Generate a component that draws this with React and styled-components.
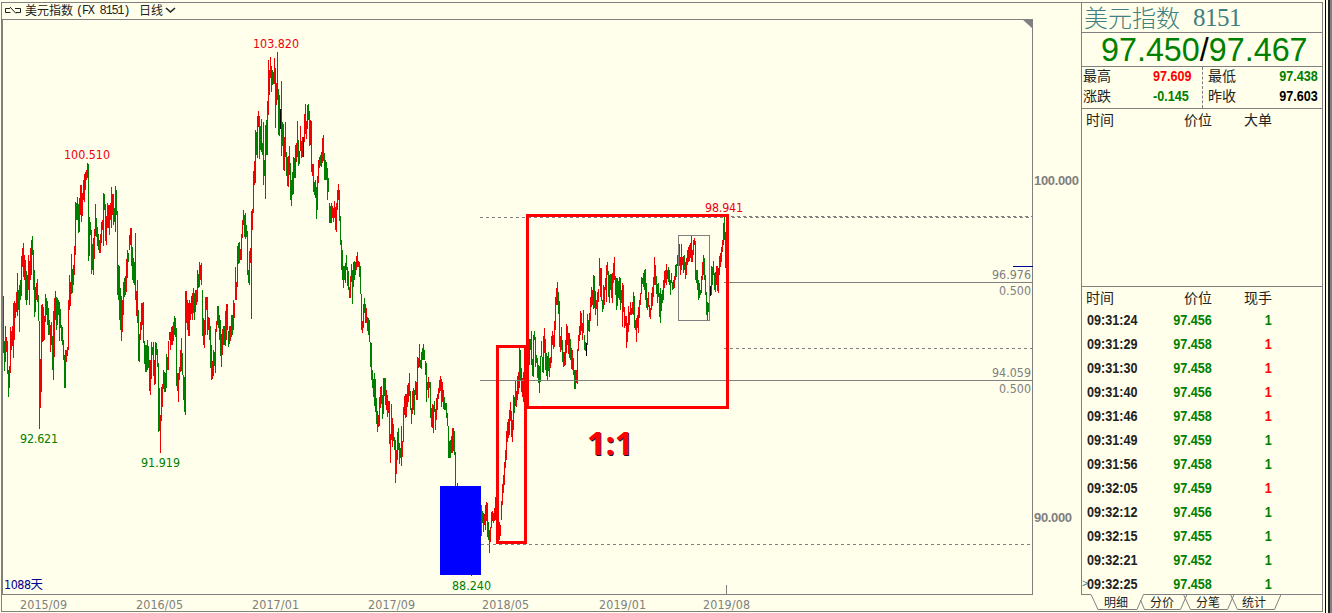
import React from 'react'
import styled, { createGlobalStyle } from 'styled-components'

const GlobalStyle = createGlobalStyle`
	* {
		box-sizing: border-box;
	}

	body {
		margin: 0;
		background: #ffffeb;
		overflow: hidden;
	}
`

const red = '#f00000'
const green = '#008000'
const gray = '#808080'
const hanFont = `'Noto Sans CJK SC', sans-serif`
const chartFont = `'DejaVu Sans Condensed', 'DejaVu Sans', sans-serif`

// Daily bars, one pixel column each: "startX: high-low+colour ..."
const bars = `
3: 296-353g 341-371g 326-362g 337-352r 341-374g 370-397g 366-388r
10: 327-373r 331-350g 326-346r 303-358g 301-340r 303-318g 292-312r 273-316r 290-310g 285-332g
20: 280-300g 256-296r 248-267r 243-277g 255-280r 260-300g 271-305g 275-300r 255-290r 261-305g
30: 248-280r 240-275r 236-255g 250-290g 270-317g 287-312r 283-300r 279-302g 295-321g 321-429g
40: 359-408r 305-392r 304-342r 307-341g 316-340r 294-322g 298-315g 301-325g 308-335g 320-335g
50: 325-352r 322-345r 336-370g 311-380r 298-357r 291-320r 297-330g 298-325g 300-315g 302-341g
60: 309-328g 325-341g 327-345g 340-360g 355-388g 350-388r 350-362r 347-356r 300-350r 275-310r
70: 282-306r 254-294g 269-293g 265-285r 246-275r 202-255r 203-220g 197-220r 204-233g 198-232r
80: 185-215r 185-222g 193-216r 180-200r 174-202r 172-190r 170-180r 163-178r 164-261g 217-256r
90: 222-235g 230-274g 244-270g 238-275r 229-259r 204-236r 218-237g 227-246g 234-250g 240-253g
100: 234-253r 222-243r 220-230r 193-246r 194-210g 204-241g 216-245r 203-228g 205-228r 205-235g
110: 203-220r 187-228g 194-215r 194-225g 208-222g 186-232r 190-215g 211-295g 265-300g 266-320g
120: 288-330g 296-341g 300-332r 282-315r 278-297g 276-295r 259-292r 250-278r 253-262g 235-250r
130: 228-245r 228-266g 247-280g 258-283g 262-285g 233-300g 291-316r 280-323g 310-361g 334-362r
140: 322-340r 303-330r 303-325r 302-343g 341-364g 345-372g 345-372g 340-370g 346-368g 360-391r
150: 360-395r 342-379r 347-355g 342-376g 360-385r 342-384r 343-355g 349-367g 363-432g 388-431g
160: 415-453r 387-421r 384-407r 370-389r 372-392g 373-392r 354-388g 357-370r 341-370r 332-340r
170: 332-350r 327-345g 326-345r 322-341r 316-335g 318-337g 328-386g 373-391g 373-402r 367-380r
180: 350-372r 338-371r 353-375g 375-400g 377-412g 291-415r 291-323r 300-330g 303-336r 300-336r
190: 303-320r 296-314r 293-320r 288-313g 293-320g 290-312g 290-305r 270-302r 274-288g 262-287g
200: 265-280r 263-285g 290-336g 318-345g 320-348r 297-335r 297-310r 297-335g 317-330r 318-340g
210: 326-368g 345-380g 361-379r 350-376r 352-366g 329-373r 321-332r 306-325g 306-328g 315-340r
220: 320-356g 334-367r 329-355r 326-345r 326-345g 311-346g 304-340r 304-330g 331-347g 326-344r
230: 326-341r 315-337g 315-335g 300-330r 303-318r 267-300g 282-300r 246-287r 243-264g 242-263g
240: 249-260r 234-260r 220-238r 210-225r 215-237g 213-239g 225-237g 231-275g 270-283g 251-285g
250: 248-263r 211-319r 209-230r 171-213r 161-185r 130-183r 132-155g 116-158r 111-127r 116-159g
260: 126-150g 119-152r 143-155g 122-185g 160-176g 125-199r 120-155g 101-155r 60-115r 70-95r
270: 57-78r 66-92r 70-85g 72-84g 58-84r 68-128g 83-105r 52-100r 89-135g 95-136g
280: 109-129k 81-156g 122-146g 124-170g 137-171r 122-157g 152-176g 157-186g 156-187r 146-175r
290: 163-200g 180-206r 172-195g 157-194r 158-178g 145-178r 143-162r 121-157g 140-166g 151-164r
300: 126-151r 141-158g 137-157r 137-157k 114-142r 104-134g 121-139r 105-129r 104-120g 111-146g
310: 120-145r 121-172g 164-176r 164-192g 182-195g 180-198r 187-219g 176-210r 160-183r 157-168r
320: 155-166g 152-167r 138-163r 135-161g 153-180g 160-180g 162-180g 168-200g 178-192g 203-223r
330: 206-223g 203-223g 206-218r 208-222g 201-218r 207-230g 203-232r 190-210r 184-200r 190-221g
340: 216-245g 240-270g 250-280g 266-288g 266-280g 263-283r 255-270g 267-286r 271-290g 287-298g
350: 276-298r 264-282r 270-304g 262-287r 261-280g 262-275r 256-270r 252-267g 261-267r 262-277g
360: 266-294g 294-330g 321-333r 304-328r 298-313g 304-323r 308-323r 317-331g 318-335g 320-342g
370: 342-367g 343-380g 370-388g 379-397r 373-406g 379-412r 398-424g 411-432g 415-427r 397-426r
380: 387-408r 386-404g 395-419g 378-414r 378-396g 378-405g 390-410r 395-417g 401-413r 401-444g
390: 434-463r 404-440g 418-447r 424-441g 437-450g 440-483g 450-474r 432-460r 428-450g 443-464g
400: 448-458g 426-466r 441-457r 407-442r 396-415r 394-418g 394-417r 385-407g 383-402r 373-396g
410: 391-410g 408-424g 391-414r 388-410r 390-415g 381-395r 382-400r 357-400r 358-368r 344-367r
420: 360-368g 352-369r 348-360g 344-360r 350-360g 361-375r 363-402g 382-390r 377-398r 382-388g
430: 382-418g 408-427g 404-428r 405-433r 401-412g 409-430g 398-420r 394-410r 388-399r 380-393r
440: 376-391r 379-407g 382-402r 390-409g 397-410g 403-410g 403-418g 413-426g 426-458g 441-458r
450: 440-458g 436-453r 428-453r 428-451g 431-455g 452-487g
457: 483-487g
471: 574-576r
481: 505-536g 511-523g 513-532g 514-525r 505-530r 502-521r 503-537g 522-540g 530-553g
490: 527-542r 512-528r 511-521r 513-523g 508-521r 497-520r 497-524g 520-535g 521-534r 522-540g
500: 525-536r 501-520r 484-505r 475-493g 462-485r 450-468g 431-460r 422-442g 419-438r 410-435r
510: 402-421r 411-437g 420-442r 395-430r 397-413g 381-406g 391-407r 376-400r 372-394r 348-388r
520: 350-380g 368-392g 378-397r 372-402g 382-404g
529: 339-365r
530: 339-350g 331-365g 359-376g 335-377r 331-340g 337-367g 355-363g 358-378g 365-383g 366-393r
540: 356-382g 341-357r 357-372g 336-373r 328-353r 339-370g 353-376g 356-380r 352-371g 358-377g
550: 357-368r 336-363r 331-345r 335-349g 321-347r 297-330r 288-305r 282-305r 292-314g 301-347g
560: 336-352r 327-350g 340-362g 352-367g 352-366r 340-365r 324-353r 326-345g 333-354r 333-358g
570: 339-360g 348-369g 350-370r 358-375g 370-389g 370-389g 370-383r 349-384r 335-351r 326-341r
580: 311-335r 313-331g 323-340r 310-333g 335-350g 342-351g 343-356k 314-345r 320-331g 313-332r
590: 297-321r 287-307r 290-305r 275-309r 276-308g 291-315g 300-309r 292-326g 289-302r 258-286g
600: 268-297r 268-301g 300-312g 285-309g 287-305r 278-290r 265-302r 262-275g 271-297g 275-303r
610: 274-290g 274-298r 273-303r 263-283g 257-280r 276-295g 278-310g 278-306r 281-298g 277-300r
620: 278-310g 290-303g 283-327r 285-312g 307-328r 316-326g 316-348r 323-342r 306-332r 312-325g
630: 302-315r 308-315g 302-314r 292-315r 296-328g 320-330g 318-342r 315-328r 307-333r 300-318r
640: 293-305r 277-294r 278-284g 273-287g 270-290g 269-300g 283-308g 298-310g 292-307r 305-317g
650: 308-319r 293-310r 287-306r 277-297r 257-285r 265-285g 276-294g 284-303g 283-297g 293-317g
660: 288-323g 294-311r 290-303g 280-300r 271-288r 270-283g 264-285r 270-279r 267-282g 270-285g
670: 280-295g 273-283r 282-290g 280-289r 276-288r 265-280r 264-277g 255-266r 235-262r 244-266g
680: 257-275r 244-270g 257-265r 256-273r 255-270g 262-279g 258-275r 250-265r 247-262r 245-261g
690: 243-258r 236-262g 250-262r 240-255r 238-245r 241-280g 270-283g 270-290g 280-300g 283-298r
700: 290-295g 276-293r 262-280r 255-275r 258-280g 275-295g 292-315g 302-320r 303-312g 305-313g
710: 286-296k 266-295r 267-285g 261-275r 273-290g 272-292g 266-285r 266-291g 268-293r 256-275r
720: 253-267r 247-262r 240-252r 223-245r 217-240g 232-268g
`

const barColors = { r: red, g: green, k: '#000' }

const parseBars = text =>
	text
		.trim()
		.split('\n')
		.flatMap(line => {
			const [start, rest] = line.split(': ')
			return rest.split(' ').map((item, i) => {
				const [, high, low, color] = item.match(/(\d+)-(\d+)(\w)/)
				return { x: Number(start) + i, high: Number(high), low: Number(low), color }
			})
		})

// One path per colour keeps the number of nodes down
const barPath = (list, color) =>
	list
		.filter(b => b.color === color)
		.map(b => `M${b.x} ${b.high}h1V${b.low}h-1z`)
		.join('')

const priceLabels = [
	{ text: '103.820', x: 253, y: 48, width: 46, color: '#ee0010' },
	{ text: '100.510', x: 64, y: 159, width: 46, color: '#ee0010' },
	{ text: '98.941', x: 705, y: 212, width: 38, color: '#ee0010' },
	{ text: '92.621', x: 20, y: 443, width: 38, color: green },
	{ text: '91.919', x: 141, y: 467, width: 39, color: green },
	{ text: '88.240', x: 452, y: 590, width: 39, color: green },
	{ text: '96.976', x: 992, y: 279, width: 39, color: gray },
	{ text: '0.500', x: 999, y: 295, width: 32, color: gray },
	{ text: '94.059', x: 992, y: 377, width: 39, color: gray },
	{ text: '0.500', x: 999, y: 393, width: 32, color: gray },
]

const dates = [
	{ text: '2015/09', x: 20 },
	{ text: '2016/05', x: 136 },
	{ text: '2017/01', x: 252 },
	{ text: '2017/09', x: 368 },
	{ text: '2018/05', x: 482 },
	{ text: '2019/01', x: 599 },
	{ text: '2019/08', x: 703 },
]

const ticks = [
	['09:31:24', '97.456', true],
	['09:31:29', '97.458', false],
	['09:31:30', '97.458', false],
	['09:31:40', '97.456', false],
	['09:31:46', '97.458', false],
	['09:31:49', '97.459', true],
	['09:31:56', '97.458', true],
	['09:32:05', '97.459', false],
	['09:32:12', '97.456', true],
	['09:32:15', '97.455', true],
	['09:32:21', '97.452', true],
	['09:32:25', '97.458', true],
]

const Window = styled.div`
	display: flex;
	width: 1332px;
	height: 613px;
	padding: 2px 0 0 1px;
	background: #ffffeb;
	overflow: hidden;
`

const Main = styled.main`
	width: 1080px;
	height: 610px;
	border: 1px solid ${gray};
	border-right: 0;
`

const TitleBar = styled.header`
	display: flex;
	align-items: center;
	height: 16px;
	padding: 0 0 2px 3px;
	font: 12px/14px ${hanFont};
	color: #222;
	white-space: pre;
`

const Code = styled.span`
	width: 63px;
	margin: 2px 0 0 3px;
	font: 12px/14px 'Liberation Mono', monospace;
	letter-spacing: -1.3px;
`

const ChartSvg = styled.svg`
	display: block;
	font: 12.4px ${chartFont};
`

const AxisText = styled.text`
	font: bold 13px 'Liberation Sans', sans-serif;
	fill: ${gray};
`

const Ratio = styled.text`
	font: bold 32px 'Open Sans', 'Noto Sans', sans-serif;
	fill: ${props => props.$color};
	letter-spacing: 0.2px;
`

const Side = styled.aside`
	width: 242px;
	height: 610px;
	border: 1px solid ${gray};
	border-left: 0;
	font: 14px/20px ${hanFont};
	color: #222;
`

const Panel = styled.div`
	height: 591px;
	border-left: 1px solid ${gray};
`

const Name = styled.h1`
	display: flex;
	gap: 13px;
	height: 30px;
	margin: 0;
	padding-left: 2px;
	border-bottom: 1px solid ${gray};
	font: 300 24px/27px ${hanFont};
	color: #408080;

	span {
		font: 25px/30px 'Liberation Serif', serif;
		letter-spacing: -0.5px;
	}
`

const Quote = styled.div`
	height: 34px;
	padding-left: 19px;
	border-bottom: 1px solid ${gray};
	font: 32.300px/34px 'Liberation Sans', sans-serif;
	color: ${green};
	white-space: nowrap;

	i {
		font-style: normal;
		color: #000;
	}
`

const Stats = styled.div`
	display: grid;
	grid-template-columns: 121px 119px;
	height: 42px;
	border-bottom: 1px solid ${gray};
`

const StatColumn = styled.div`
	padding: ${props => (props.$divided ? '0 0 0 1px' : '0 4px 0 5px')};
	border-right: ${props => (props.$divided ? `1px dashed ${gray}` : '0')};
`

const Stat = styled.div`
	display: grid;
	grid-template-columns: ${props => (props.$left ? '70px auto' : '50px auto')};
	justify-content: ${props => (props.$left ? 'start' : 'space-between')};
	height: 20px;
	line-height: 16px;
`

const Num = styled.span`
	display: inline-block;
	font: bold 14px/18px 'Liberation Sans', sans-serif;
	color: ${props => props.$color};
	transform: scaleX(0.9);
	transform-origin: ${props => props.$origin || 'right'};
`

const Head = styled.div`
	display: grid;
	grid-template-columns: 98px 60px 60px;
	height: 21px;
	padding-left: 4px;
	line-height: 20px;
`

const Orders = styled.section`
	height: 178px;
	border-bottom: 1px solid ${gray};
`

const Trades = styled.section`
	height: 307px;
`

const Trade = styled.div`
	display: grid;
	grid-template-columns: 60px 65px 60px;
	align-items: center;
	height: 24px;
	padding-left: 5px;

	span:not(:first-child) {
		justify-self: end;
	}
`

const Cursor = styled.i`
	position: absolute;
	left: 1082px;
	top: 578px;
	font: 10px/12px 'Liberation Sans', sans-serif;
	color: #408080;
`

const Tabs = styled.nav`
	position: relative;
	display: flex;
	gap: 22px;
	height: 17px;
	padding-left: 23px;
	font-size: 12px;
	line-height: 15px;
`

const TabLines = styled.svg`
	position: absolute;
	left: 0;
	top: 0;
`

const Tab = styled.span`
	width: 24px;
	white-space: nowrap;
`

const Edge = styled.div`
	width: 7px;
	height: 613px;
	margin: -2px 0 0 auto;
	border-left: 1px solid #000;
	background: linear-gradient(90deg, #ffffeb 2px, #222 2px 4px, ${gray} 4px);
`

const LinkIcon = () => (
	<svg width="20" height="14" viewBox="0 0 20 14" fill="none" stroke="#222">
		<path d="M5 5.500H.5v4H5.500M10 5.500h5.500v4H11M5 4l6 6.500" />
	</svg>
)

const Chevron = () => (
	<svg width="14" height="10" viewBox="0 0 14 10" fill="none" stroke="#222" strokeWidth="1.600">
		<path d="M3 3l4.500 4L12 3" />
	</svg>
)

const Chart = () => {
	const list = React.useMemo(() => parseBars(bars), [])

	return (
		<ChartSvg width="1079" height="592" viewBox="2 19 1079 592">
			<g fill="none" stroke={gray} shapeRendering="crispEdges">
				<path d="M2 19.500H1032.500V594.500M2 594.500H1033" />
				<path d="M2.500 19V594" />
				<path d="M726.500 585v9" />
			</g>
			<path d="M1022 19h11v10z" fill={gray} />

			<g shapeRendering="crispEdges">
				{Object.keys(barColors).map(key => (
					<path key={key} d={barPath(list, key)} fill={barColors[key]} />
				))}
			</g>

			{/* Retracement levels */}
			<g fill="none" stroke={gray} shapeRendering="crispEdges">
				<path d="M480 380.500H1032M724 282.500H1032" />
				<path d="M480 217.500H1032M724 348.500H1032M481 544.500H1030" strokeDasharray="3 3" />
				<path d="M731 216.500H1032" strokeDasharray="3 3" />
				<path d="M678.500 235.500h31v85h-31z" />
				<path d="M1013 266.500h20" stroke="#000090" />
			</g>

			<g fill="none" stroke="#ff0000" strokeWidth="3" shapeRendering="crispEdges">
				<rect x="497.500" y="346.500" width="28" height="196" />
				<rect x="527.500" y="215.500" width="200" height="192" />
			</g>
			<rect x="440" y="486" width="41" height="89" fill="#0000ff" />

			{priceLabels.map(label => (
				<text key={label.text + label.y} x={label.x} y={label.y} textLength={label.width} fill={label.color}>
					{label.text}
				</text>
			))}

			<Ratio $color="#111133" x="588" y="456">
				1:1
			</Ratio>
			<Ratio $color="#ff0000" x="587" y="455">
				1:1
			</Ratio>

			<text x="4" y="589" fill="#000090" textLength="39" fontFamily={`'DejaVu Sans Condensed', ${hanFont}`}>
				1088天
			</text>

			{dates.map(date => (
				<text key={date.text} x={date.x} y="609" textLength="47" fill={gray}>
					{date.text}
				</text>
			))}

			<AxisText x="1034" y="185" textLength="45">
				100.000
			</AxisText>
			<AxisText x="1034" y="522" textLength="38">
				90.000
			</AxisText>
		</ChartSvg>
	)
}

const App = () => (
	<Window>
		<GlobalStyle />
		<Main>
			<TitleBar>
				<LinkIcon />
				<span>美元指数</span>
				<Code>(FX 8151)</Code>
				<span>日线</span>
				<Chevron />
			</TitleBar>
			<Chart />
		</Main>
		<Side>
			<Panel>
				<Name>
					美元指数 <span>8151</span>
				</Name>
				<Quote>
					97.450<i>/</i>97.467
				</Quote>
				<Stats>
					<StatColumn $divided>
						<Stat $left>
							最高
							<Num $color="#ff0000" $origin="left">
								97.609
							</Num>
						</Stat>
						<Stat $left>
							涨跌
							<Num $color={green} $origin="left">
								-0.145
							</Num>
						</Stat>
					</StatColumn>
					<StatColumn>
						<Stat>
							最低<Num $color={green}>97.438</Num>
						</Stat>
						<Stat>
							昨收<Num $color="#000">97.603</Num>
						</Stat>
					</StatColumn>
				</Stats>
				<Orders>
					<Head>
						<span>时间</span>
						<span>价位</span>
						<span>大单</span>
					</Head>
				</Orders>
				<Trades>
					<Head>
						<span>时间</span>
						<span>价位</span>
						<span>现手</span>
					</Head>
					{ticks.map(([time, price, down]) => (
						<Trade key={time}>
							<Num $color="#222" $origin="left">
								{time}
							</Num>
							<Num $color={green}>{price}</Num>
							<Num $color={down ? green : '#ff0000'}>1</Num>
						</Trade>
					))}
					<Cursor>&gt;</Cursor>
				</Trades>
			</Panel>
			<Tabs>
				<TabLines width="242" height="17" viewBox="1081 594 242 17" fill="none" stroke={gray}>
					<path d="M1081 594.500h10l7 15h39l6.500-15H1322" />
					<path d="M1140.500 600l4 9.500h36l6.500-15M1183.500 594.500l7 15h37l6.500-15M1230.500 594.500l7 15h37l6.500-15" />
				</TabLines>
				<Tab>明细</Tab>
				<Tab>分价</Tab>
				<Tab>分笔</Tab>
				<Tab>统计</Tab>
			</Tabs>
		</Side>
		<Edge />
	</Window>
)

export default App
